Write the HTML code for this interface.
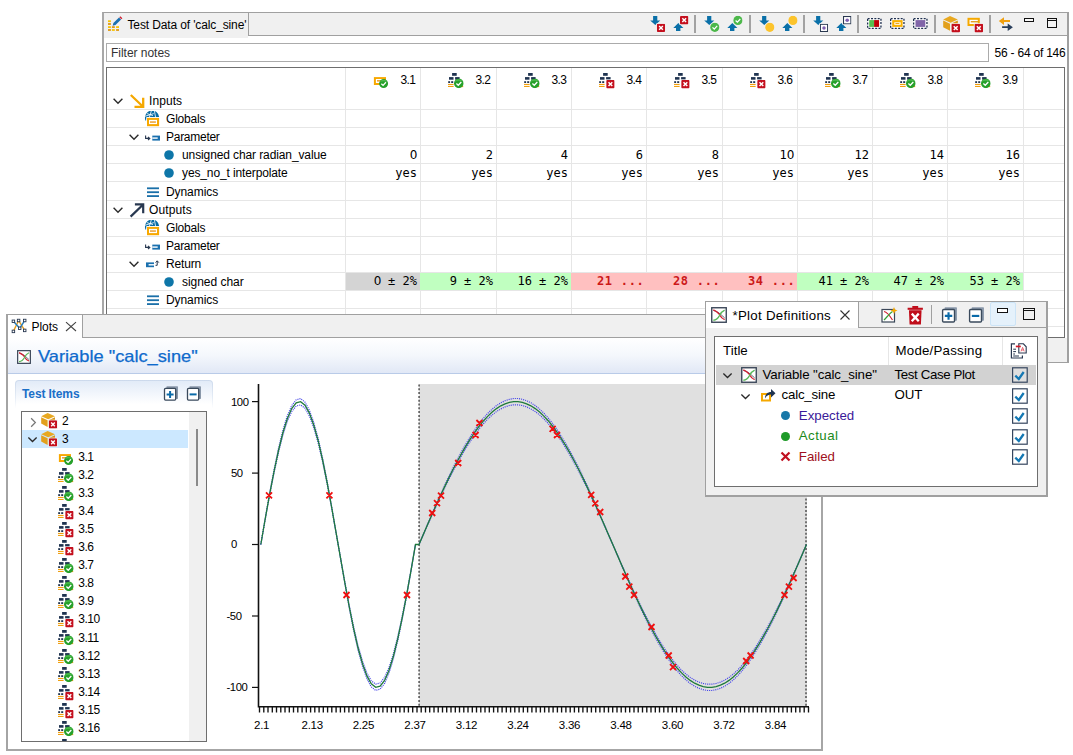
<!DOCTYPE html><html><head><meta charset="utf-8"><title>Test Data of calc_sine</title><style>
*{box-sizing:border-box}
html,body{margin:0;padding:0}
body{width:1073px;height:755px;overflow:hidden;background:#fff;position:relative;font-family:"Liberation Sans",sans-serif;font-size:12px;color:#000}
.a{position:absolute}
.t{position:absolute;white-space:nowrap;height:18px;line-height:18px;font-size:12px;letter-spacing:-0.25px}
.i{position:absolute;overflow:visible}
.m{font-family:"DejaVu Sans Mono","Liberation Mono",monospace;font-size:12px;letter-spacing:0;text-align:right}
.z{font-family:"DejaVu Sans",sans-serif;letter-spacing:-0.41px}
.hl{position:absolute;height:1px;background:#e6e6e6}
.vl{position:absolute;width:1px;background:#e6e6e6}
</style></head><body>
<svg width="0" height="0" style="position:absolute"><defs>
<symbol id="chev" viewBox="0 0 16 16"><path d="M3.6 5.8 L8 10.2 L12.4 5.8" fill="none" stroke="#2a2a2a" stroke-width="1.4"/></symbol>
<symbol id="chevr" viewBox="0 0 16 16"><path d="M5.5 3.5 L10 8 L5.5 12.5" fill="none" stroke="#777" stroke-width="1.3"/></symbol>
<symbol id="redx" viewBox="0 0 8 8"><rect x="0" y="0" width="8" height="8" rx="1" fill="#c4101e"/><path d="M2.2 2.2 L5.8 5.8 M5.8 2.2 L2.2 5.8" stroke="#fff" stroke-width="1.4"/></symbol>
<symbol id="grn" viewBox="0 0 9 9"><circle cx="4.5" cy="4.5" r="4.4" fill="#26a02a"/><path d="M0.9 3 A4 4 0 0 1 8.1 3 A8 8 0 0 0 0.9 3 Z" fill="#5cc45c" opacity="0.7"/><path d="M2.3 4.6 L4 6.2 L6.8 3.2" fill="none" stroke="#fff" stroke-width="1.2"/></symbol>
<symbol id="step" viewBox="0 0 16 16"><g fill="#1f3350"><rect x="4.1" y="0" width="4.6" height="2.8"/><rect x="1" y="4.1" width="4.5" height="2.6"/><rect x="7.1" y="4.1" width="4.5" height="2.6"/><rect x="0.2" y="8.2" width="1.9" height="1.8"/><rect x="3.2" y="8.2" width="2" height="1.8"/></g><rect x="0" y="10.9" width="5.6" height="1.1" fill="#f0a010"/><rect x="0" y="12.9" width="5.6" height="1.1" fill="#f0a010"/><rect x="12" y="13" width="3.2" height="1.1" fill="#f0a010"/></symbol>
<symbol id="stepok" viewBox="0 0 16 16"><use href="#step"/><use href="#grn" x="5.9" y="5.5" width="9.8" height="9.8"/></symbol>
<symbol id="stepbad" viewBox="0 0 16 16"><use href="#step"/><rect x="6.6" y="6.4" width="9.4" height="9.4" fill="#fff" opacity="0.8"/><use href="#redx" x="7.2" y="7" width="8.4" height="8.4"/></symbol>
<symbol id="winok" viewBox="0 0 16 16"><rect x="0.9" y="4.1" width="12.1" height="7.9" fill="#f8a800"/><rect x="2.9" y="6" width="8.1" height="4" fill="#fff"/><rect x="4" y="7.2" width="5" height="1.3" fill="#e89010"/><use href="#grn" x="6" y="6" width="9.2" height="9.2"/></symbol>
<symbol id="cube" viewBox="0 0 18 18"><path d="M7 1 L14.8 4.6 L7.6 7.7 L0.2 4.6 Z" fill="#e8a820"/><path d="M0.2 5.6 L7 8.7 L7 15.8 L0.2 12.2 Z" fill="#e2a01c"/><path d="M8.1 8.7 L14.8 5.6 L14.8 12.2 L8.1 15.8 Z" fill="#d89414"/><rect x="7.7" y="8.1" width="10" height="10" fill="#f0f0f0" opacity="0.85"/><use href="#redx" x="8.4" y="8.8" width="8.6" height="8.6"/></symbol>
<symbol id="arrin" viewBox="0 0 16 16"><path d="M1.8 2 L13.3 13 M5.5 13.8 L14.2 13.8 L14.2 4.8" fill="none" stroke="#f5a800" stroke-width="2.3"/></symbol>
<symbol id="arrout" viewBox="0 0 16 16"><path d="M1.6 14.6 L13.4 3.2 M5.9 2.4 L14.2 2.4 L14.2 11.2" fill="none" stroke="#283850" stroke-width="2.2"/></symbol>
<symbol id="glob" viewBox="0 0 16 16"><path d="M1 7.2 A7.1 7.1 0 0 1 15.2 6.1 L2.4 6.1 L2 10 Q0.9 9 1 7.2 Z" fill="#0a6ca4"/><path d="M7.4 -0.3 L5.4 6.2 M10.4 0 L11.6 6.2 M1.2 5.2 L9.8 2.6 M3 2.6 L9 4.6" stroke="#fff" stroke-width="0.8" fill="none"/><rect x="3" y="6.9" width="12.1" height="8.3" fill="#f8a800"/><rect x="5" y="8.9" width="8" height="4.2" fill="#fff"/><rect x="6" y="10.4" width="5.9" height="1.3" fill="#e89010"/></symbol>
<symbol id="param" viewBox="0 0 16 16"><path d="M1.6 6.6 L1.6 9.4 L5.6 9.4 M4 7.8 L5.8 9.4 L4 11" fill="none" stroke="#283850" stroke-width="1.1"/><rect x="8.3" y="6.6" width="8" height="5" fill="#1a70ae"/><rect x="8.3" y="8.4" width="5.4" height="1.4" fill="#fff"/></symbol>
<symbol id="ret" viewBox="0 0 16 16"><rect x="2" y="6.4" width="8" height="4.8" fill="#1a70ae"/><rect x="4.6" y="8.1" width="5.4" height="1.4" fill="#fff"/><path d="M11.5 9.3 L13.2 9.3 L13.2 5 M11.6 6.6 L13.2 4.8 L14.8 6.6" fill="none" stroke="#283850" stroke-width="1"/></symbol>
<symbol id="dyn" viewBox="0 0 16 16"><rect x="2" y="3.4" width="12" height="1.8" fill="#1a6fa8"/><rect x="2" y="7.3" width="12" height="1.8" fill="#1a6fa8"/><rect x="2" y="11.2" width="12" height="1.8" fill="#1a6fa8"/></symbol>
<symbol id="dot" viewBox="0 0 16 16"><circle cx="8" cy="8" r="4.8" fill="#0e76a8"/></symbol>
<symbol id="var" viewBox="0 0 15 15"><rect x="0.7" y="0.7" width="13.6" height="13.6" fill="#fff" stroke="#3a4658" stroke-width="1.3"/><path d="M2.2 3.2 C6.5 4.2 8 6 12.8 10.2" fill="none" stroke="#283850" stroke-width="0.7"/><path d="M2.2 2.8 C5 4.2 7.5 5.5 8.5 8 C9.5 10 11 11.2 12.8 11.8" fill="none" stroke="#d02030" stroke-width="1.3"/><path d="M2.2 12.4 C5.5 12.2 7 10 8 8 C9 5.8 10.5 4 12.8 3" fill="none" stroke="#58b858" stroke-width="1.3"/></symbol>
<symbol id="dn" viewBox="0 0 16 16"><path d="M3.1 1 L7.3 1 L7.3 5.4 L10.3 5.4 L5.25 9.9 L0.2 5.4 L3.1 5.4 Z" fill="#0a70a8"/></symbol>
<symbol id="up" viewBox="0 0 16 16"><path d="M3 17 L7.4 17 L7.4 12.9 L10.4 12.9 L5.3 8.1 L0.3 12.9 L3 12.9 Z" fill="#0a70a8"/></symbol>
<symbol id="ycirc" viewBox="0 0 9 9"><circle cx="4.5" cy="4.5" r="4.4" fill="#fcc42c"/></symbol><symbol id="grn2" viewBox="0 0 9 9"><circle cx="4.5" cy="4.5" r="4.4" fill="#4cb84a"/><path d="M2.3 4.6 L4 6.2 L6.8 3.2" fill="none" stroke="#fff" stroke-width="1.2"/></symbol>
<symbol id="psq" viewBox="0 0 8 8"><rect x="0.5" y="0.5" width="7" height="7" fill="#fff" stroke="#2a3850" stroke-width="1"/><circle cx="4" cy="4" r="1.7" fill="#8060b0"/></symbol>
<symbol id="plus" viewBox="0 0 16 16"><path d="M3.4 1.8 L3.4 0.9 Q3.4 0.2 4.1 0.2 L14.3 0.2 Q15 0.2 15 0.9 L15 12.3 Q15 13 14.3 13 L13.3 13 Z" fill="#8a98aa"/><rect x="1.5" y="2.4" width="11.2" height="11.7" rx="1" fill="#fff" stroke="#3a4a5c" stroke-width="1.3"/><path d="M3.6 8.4 L10.6 8.4 M7.1 4.9 L7.1 11.9" stroke="#0a6aa8" stroke-width="2"/></symbol>
<symbol id="minus" viewBox="0 0 16 16"><path d="M3.4 1.8 L3.4 0.9 Q3.4 0.2 4.1 0.2 L14.3 0.2 Q15 0.2 15 0.9 L15 12.3 Q15 13 14.3 13 L13.3 13 Z" fill="#8a98aa"/><rect x="1.5" y="2.4" width="11.2" height="11.7" rx="1" fill="#fff" stroke="#3a4a5c" stroke-width="1.3"/><path d="M3.6 8.4 L10.6 8.4" stroke="#0a6aa8" stroke-width="2"/></symbol>
<symbol id="chk" viewBox="0 0 16 16"><rect x="0.6" y="0.8" width="14.6" height="14.4" fill="#fff" fill-opacity="0.3" stroke="#35455e" stroke-width="1.2"/><path d="M3.3 8.7 L6.8 12 L11.7 5" fill="none" stroke="#1478b4" stroke-width="2.3"/></symbol>
</defs></svg>
<div class="a" style="left:102px;top:12px;width:967px;height:351px;background:#fff;border:1px solid #a0a0a0;border-left:2px solid #a8a8a8;border-right:2px solid #a0a0a0"></div>
<div class="a" style="left:104px;top:13px;width:963px;height:22px;background:#f0f0f0"></div>
<div class="a" style="left:104px;top:338px;width:963px;height:24px;background:#f0f0f0"></div>
<div class="a" style="left:248px;top:35px;width:819px;height:1px;background:#a0a0a0"></div>
<div class="a" style="left:104px;top:13px;width:145px;height:25px;background:#f0f0f0;border-right:1px solid #a0a0a0"></div>
<div class="a" style="left:248px;top:36px;width:1px;height:2px;background:#fff"></div>
<svg class="i" style="left:108px;top:16px" width="16" height="16" viewBox="0 0 16 16"><rect x="0" y="4.3" width="2.9" height="1.8" fill="#f8c400"/><rect x="0" y="7.1" width="2.9" height="1.8" fill="#e09810"/><rect x="0" y="10.2" width="2.9" height="1.8" fill="#f8c400"/><rect x="0" y="13.1" width="2.9" height="1.8" fill="#e09810"/><rect x="3.9" y="10.2" width="2.9" height="1.8" fill="#e09810"/><rect x="3.9" y="13.1" width="2.9" height="1.8" fill="#f8c400"/><rect x="8.1" y="10.2" width="2.9" height="1.8" fill="#f8c400"/><rect x="8.1" y="13.1" width="2.9" height="1.8" fill="#e09810"/><path d="M4.7 9.8 L5.4 7 L11 1.5 L13.1 3.6 L7.5 9.1 Z" fill="#1a70b0"/><path d="M11.3 1.2 L12.3 0.2 L14.4 2.3 L13.4 3.3 Z" fill="#d02030"/></svg>
<div class="t " style="left:127.5px;top:16px;letter-spacing:-0.13px">Test Data of 'calc_sine'</div>
<svg class="i" style="left:650px;top:15px" width="18" height="18" viewBox="0 0 18 18"><use href="#dn" width="16" height="16"/><rect x="6.3" y="8.2" width="9.4" height="9.4" fill="#f0f0f0" opacity="0.8"/><use href="#redx" x="6.9" y="8.8" width="8.2" height="8.2"/></svg>
<svg class="i" style="left:673px;top:15px" width="18" height="18" viewBox="0 0 18 18"><use href="#up" width="16" height="16"/><rect x="6.4" y="0.4" width="9.6" height="9.6" fill="#f0f0f0" opacity="0.8"/><use href="#redx" x="7" y="1" width="8.4" height="8.4"/></svg>
<div class="a" style="left:694px;top:15px;width:2px;height:18px;background:#a2a2a2"></div>
<svg class="i" style="left:704.3px;top:15px" width="18" height="18" viewBox="0 0 18 18"><use href="#dn" width="16" height="16"/><use href="#grn2" x="6.1" y="7.6" width="9.4" height="9.4"/></svg>
<svg class="i" style="left:727.3px;top:15px" width="18" height="18" viewBox="0 0 18 18"><use href="#up" width="16" height="16"/><use href="#grn2" x="6.2" y="0.7" width="9.4" height="9.4"/></svg>
<div class="a" style="left:748.5px;top:15px;width:2px;height:18px;background:#a2a2a2"></div>
<svg class="i" style="left:758.6px;top:15px" width="18" height="18" viewBox="0 0 18 18"><use href="#dn" width="16" height="16"/><use href="#ycirc" x="6.1" y="7.6" width="9.4" height="9.4"/></svg>
<svg class="i" style="left:781.6px;top:15px" width="18" height="18" viewBox="0 0 18 18"><use href="#up" width="16" height="16"/><use href="#ycirc" x="6.2" y="0.7" width="9.4" height="9.4"/></svg>
<div class="a" style="left:802.8px;top:15px;width:2px;height:18px;background:#a2a2a2"></div>
<svg class="i" style="left:812.9px;top:15px" width="18" height="18" viewBox="0 0 18 18"><use href="#dn" width="16" height="16"/><rect x="6.3" y="8.2" width="9.4" height="9.4" fill="#f0f0f0" opacity="0.8"/><use href="#psq" x="6.9" y="8.8" width="8.2" height="8.2"/></svg>
<svg class="i" style="left:835.9px;top:15px" width="18" height="18" viewBox="0 0 18 18"><use href="#up" width="16" height="16"/><rect x="6.4" y="0.4" width="9.6" height="9.6" fill="#f0f0f0" opacity="0.8"/><use href="#psq" x="7" y="1" width="8.4" height="8.4"/></svg>
<div class="a" style="left:857px;top:15px;width:2px;height:18px;background:#a2a2a2"></div>
<svg class="i" style="left:867px;top:18px" width="15" height="11" viewBox="0 0 15 11"><rect x="0.65" y="0.65" width="13.3" height="9.7" fill="#fff" stroke="#1f3050" stroke-width="1.3" stroke-dasharray="2 1.35"/><rect x="2.2" y="2.1" width="5" height="6.8" fill="#58c050"/><rect x="7.1" y="2.1" width="5" height="6.8" fill="#c00008"/></svg>
<svg class="i" style="left:890px;top:18px" width="15" height="11" viewBox="0 0 15 11"><rect x="0.65" y="0.65" width="13.3" height="9.7" fill="#fff" stroke="#1f3050" stroke-width="1.3" stroke-dasharray="2 1.35"/><rect x="2.2" y="2.1" width="10.4" height="6.8" fill="#f8b000"/><rect x="4.3" y="4.3" width="6.4" height="2.5" fill="#fff"/><rect x="5.4" y="5.1" width="4" height="0.9" fill="#f0a000"/></svg>
<svg class="i" style="left:913px;top:18px" width="15" height="11" viewBox="0 0 15 11"><rect x="0.65" y="0.65" width="13.3" height="9.7" fill="#fff" stroke="#1f3050" stroke-width="1.3" stroke-dasharray="2 1.35"/><rect x="2.5" y="2.1" width="9.8" height="6.8" fill="#8064a8"/></svg>
<div class="a" style="left:934px;top:15px;width:2px;height:18px;background:#a2a2a2"></div>
<svg class="i" style="left:943px;top:15px" width="18" height="18" viewBox="0 0 18 18"><use href="#cube"/></svg>
<svg class="i" style="left:967px;top:16px" width="17" height="17" viewBox="0 0 17 17"><rect x="0.5" y="1.8" width="12.3" height="8.2" fill="#f5a800"/><rect x="2.5" y="3.8" width="8.3" height="4.2" fill="#fff"/><rect x="3.8" y="5.1" width="7.4" height="1.3" fill="#e09810"/><rect x="6.8" y="7.1" width="10" height="10" fill="#f0f0f0" opacity="0.85"/><use href="#redx" x="7.5" y="7.8" width="8.6" height="8.6"/></svg>
<div class="a" style="left:988.5px;top:15px;width:2px;height:18px;background:#a2a2a2"></div>
<svg class="i" style="left:998px;top:16px" width="16" height="16" viewBox="0 0 16 16"><path d="M0.8 5.1 L6 1.3 L6 4.1 L12 4.1 L12 6 L6 6 L6 8.9 Z" fill="#f0a010"/><path d="M14.9 11.2 L9.7 7.4 L9.7 10.3 L4.1 10.3 L4.1 12.1 L9.7 12.1 L9.7 14.9 Z" fill="#2a3f5c"/></svg>
<div class="a" style="left:1024px;top:18px;width:10px;height:4px;border:1px solid #111;background:#f8f8f8"></div>
<div class="a" style="left:1047px;top:18px;width:10px;height:10px;border:1px solid #111;background:linear-gradient(#f0f0f0 1px,#111 1px,#111 2px,#f4f4f4 2px)"></div>
<div class="a" style="left:106px;top:43px;width:883px;height:19px;background:#fff;border:1px solid #ababab"></div>
<div class="t " style="left:111px;top:43.5px;letter-spacing:-0.03px;color:#333">Filter notes</div>
<div class="t " style="left:994.5px;top:43.5px;letter-spacing:-0.218px;">56 - 64 of 146</div>
<div class="a" style="left:106px;top:67px;width:959px;height:271px;background:#fff;border:1px solid #6e6e6e"></div>
<div class="hl" style="left:107px;top:109px;width:957px"></div>
<div class="hl" style="left:107px;top:127px;width:957px"></div>
<div class="hl" style="left:107px;top:145px;width:957px"></div>
<div class="hl" style="left:107px;top:163px;width:957px"></div>
<div class="hl" style="left:107px;top:181px;width:957px"></div>
<div class="hl" style="left:107px;top:200px;width:957px"></div>
<div class="hl" style="left:107px;top:218px;width:957px"></div>
<div class="hl" style="left:107px;top:236px;width:957px"></div>
<div class="hl" style="left:107px;top:254px;width:957px"></div>
<div class="hl" style="left:107px;top:272px;width:957px"></div>
<div class="hl" style="left:107px;top:290px;width:957px"></div>
<div class="hl" style="left:107px;top:308px;width:957px"></div>
<div class="hl" style="left:107px;top:326px;width:957px"></div>
<div class="vl" style="left:345px;top:68px;height:269px"></div>
<div class="vl" style="left:420px;top:68px;height:269px"></div>
<div class="vl" style="left:496px;top:68px;height:269px"></div>
<div class="vl" style="left:571px;top:68px;height:269px"></div>
<div class="vl" style="left:646px;top:68px;height:269px"></div>
<div class="vl" style="left:722px;top:68px;height:269px"></div>
<div class="vl" style="left:797px;top:68px;height:269px"></div>
<div class="vl" style="left:872px;top:68px;height:269px"></div>
<div class="vl" style="left:947px;top:68px;height:269px"></div>
<div class="vl" style="left:1023px;top:68px;height:269px"></div>
<svg class="i" style="left:373px;top:73px" width="16" height="16" viewBox="0 0 16 16"><use href="#winok"/></svg>
<div class="t " style="left:400.5px;top:71px;letter-spacing:-0.6px">3.1</div>
<svg class="i" style="left:448px;top:73px" width="16" height="16" viewBox="0 0 16 16"><use href="#stepok"/></svg>
<div class="t " style="left:475.5px;top:71px;letter-spacing:-0.6px">3.2</div>
<svg class="i" style="left:524px;top:73px" width="16" height="16" viewBox="0 0 16 16"><use href="#stepok"/></svg>
<div class="t " style="left:551.5px;top:71px;letter-spacing:-0.6px">3.3</div>
<svg class="i" style="left:599px;top:73px" width="16" height="16" viewBox="0 0 16 16"><use href="#stepbad"/></svg>
<div class="t " style="left:626.5px;top:71px;letter-spacing:-0.6px">3.4</div>
<svg class="i" style="left:674px;top:73px" width="16" height="16" viewBox="0 0 16 16"><use href="#stepbad"/></svg>
<div class="t " style="left:701.5px;top:71px;letter-spacing:-0.6px">3.5</div>
<svg class="i" style="left:750px;top:73px" width="16" height="16" viewBox="0 0 16 16"><use href="#stepbad"/></svg>
<div class="t " style="left:777.5px;top:71px;letter-spacing:-0.6px">3.6</div>
<svg class="i" style="left:825px;top:73px" width="16" height="16" viewBox="0 0 16 16"><use href="#stepok"/></svg>
<div class="t " style="left:852.5px;top:71px;letter-spacing:-0.6px">3.7</div>
<svg class="i" style="left:900px;top:73px" width="16" height="16" viewBox="0 0 16 16"><use href="#stepok"/></svg>
<div class="t " style="left:927.5px;top:71px;letter-spacing:-0.6px">3.8</div>
<svg class="i" style="left:975px;top:73px" width="16" height="16" viewBox="0 0 16 16"><use href="#stepok"/></svg>
<div class="t " style="left:1002.5px;top:71px;letter-spacing:-0.6px">3.9</div>
<svg class="i" style="left:110px;top:93px" width="16" height="16" viewBox="0 0 16 16"><use href="#chev"/></svg>
<svg class="i" style="left:129px;top:93px" width="16" height="16" viewBox="0 0 16 16"><use href="#arrin"/></svg>
<div class="t " style="left:149px;top:92px;letter-spacing:0.085px;">Inputs</div>
<svg class="i" style="left:144px;top:111px" width="16" height="16" viewBox="0 0 16 16"><use href="#glob"/></svg>
<div class="t " style="left:166px;top:110px;letter-spacing:-0.198px;">Globals</div>
<svg class="i" style="left:126px;top:129px" width="16" height="16" viewBox="0 0 16 16"><use href="#chev"/></svg>
<svg class="i" style="left:144px;top:129px" width="16" height="16" viewBox="0 0 16 16"><use href="#param"/></svg>
<div class="t " style="left:166px;top:128px;letter-spacing:-0.269px;">Parameter</div>
<svg class="i" style="left:161px;top:147px" width="16" height="16" viewBox="0 0 16 16"><use href="#dot"/></svg>
<div class="t " style="left:182px;top:146px;letter-spacing:-0.109px;">unsigned char radian_value</div>
<svg class="i" style="left:161px;top:165px" width="16" height="16" viewBox="0 0 16 16"><use href="#dot"/></svg>
<div class="t " style="left:182px;top:164px;letter-spacing:-0.124px;">yes_no_t interpolate</div>
<svg class="i" style="left:145px;top:184px" width="16" height="16" viewBox="0 0 16 16"><use href="#dyn"/></svg>
<div class="t " style="left:166px;top:183px;letter-spacing:-0.072px;">Dynamics</div>
<svg class="i" style="left:110px;top:202px" width="16" height="16" viewBox="0 0 16 16"><use href="#chev"/></svg>
<svg class="i" style="left:129px;top:202px" width="16" height="16" viewBox="0 0 16 16"><use href="#arrout"/></svg>
<div class="t " style="left:149px;top:201px;letter-spacing:0.125px;">Outputs</div>
<svg class="i" style="left:144px;top:220px" width="16" height="16" viewBox="0 0 16 16"><use href="#glob"/></svg>
<div class="t " style="left:166px;top:219px;letter-spacing:-0.198px;">Globals</div>
<svg class="i" style="left:144px;top:238px" width="16" height="16" viewBox="0 0 16 16"><use href="#param"/></svg>
<div class="t " style="left:166px;top:237px;letter-spacing:-0.269px;">Parameter</div>
<svg class="i" style="left:126px;top:256px" width="16" height="16" viewBox="0 0 16 16"><use href="#chev"/></svg>
<svg class="i" style="left:144px;top:256px" width="16" height="16" viewBox="0 0 16 16"><use href="#ret"/></svg>
<div class="t " style="left:166px;top:255px;letter-spacing:-0.17px;">Return</div>
<svg class="i" style="left:161px;top:274px" width="16" height="16" viewBox="0 0 16 16"><use href="#dot"/></svg>
<div class="t " style="left:182px;top:273px;letter-spacing:-0.04px;">signed char</div>
<svg class="i" style="left:145px;top:292px" width="16" height="16" viewBox="0 0 16 16"><use href="#dyn"/></svg>
<div class="t " style="left:166px;top:291px;letter-spacing:-0.072px;">Dynamics</div>
<div class="t m" style="left:345px;top:146px;width:72px;"><span class="z">0</span></div>
<div class="t m" style="left:345px;top:164px;width:72px;">yes</div>
<div class="a" style="left:346px;top:273px;width:74px;height:17px;background:#d4d4d4"></div>
<div class="t m" style="left:345px;top:272px;width:72px;"><span class="z">0</span>&nbsp;±&nbsp;2%</div>
<div class="t m" style="left:420px;top:146px;width:73px;">2</div>
<div class="t m" style="left:420px;top:164px;width:73px;">yes</div>
<div class="a" style="left:420px;top:273px;width:76px;height:17px;background:#c0ffc0"></div>
<div class="t m" style="left:420px;top:272px;width:73px;">9&nbsp;±&nbsp;2%</div>
<div class="t m" style="left:496px;top:146px;width:72px;">4</div>
<div class="t m" style="left:496px;top:164px;width:72px;">yes</div>
<div class="a" style="left:496px;top:273px;width:75px;height:17px;background:#c0ffc0"></div>
<div class="t m" style="left:496px;top:272px;width:72px;">16&nbsp;±&nbsp;2%</div>
<div class="t m" style="left:571px;top:146px;width:72px;">6</div>
<div class="t m" style="left:571px;top:164px;width:72px;">yes</div>
<div class="a" style="left:571px;top:273px;width:75px;height:17px;background:#ffc0c0"></div>
<div class="t m" style="left:571px;top:272px;width:73.5px;color:#cc1818;font-weight:bold;letter-spacing:0.7px">21&nbsp;...</div>
<div class="t m" style="left:646px;top:146px;width:73px;">8</div>
<div class="t m" style="left:646px;top:164px;width:73px;">yes</div>
<div class="a" style="left:646px;top:273px;width:76px;height:17px;background:#ffc0c0"></div>
<div class="t m" style="left:646px;top:272px;width:74.5px;color:#cc1818;font-weight:bold;letter-spacing:0.7px">28&nbsp;...</div>
<div class="t m" style="left:722px;top:146px;width:72px;">1<span class="z">0</span></div>
<div class="t m" style="left:722px;top:164px;width:72px;">yes</div>
<div class="a" style="left:722px;top:273px;width:75px;height:17px;background:#ffc0c0"></div>
<div class="t m" style="left:722px;top:272px;width:73.5px;color:#cc1818;font-weight:bold;letter-spacing:0.7px">34&nbsp;...</div>
<div class="t m" style="left:797px;top:146px;width:72px;">12</div>
<div class="t m" style="left:797px;top:164px;width:72px;">yes</div>
<div class="a" style="left:797px;top:273px;width:75px;height:17px;background:#c0ffc0"></div>
<div class="t m" style="left:797px;top:272px;width:72px;">41&nbsp;±&nbsp;2%</div>
<div class="t m" style="left:872px;top:146px;width:72px;">14</div>
<div class="t m" style="left:872px;top:164px;width:72px;">yes</div>
<div class="a" style="left:872px;top:273px;width:75px;height:17px;background:#c0ffc0"></div>
<div class="t m" style="left:872px;top:272px;width:72px;">47&nbsp;±&nbsp;2%</div>
<div class="t m" style="left:947px;top:146px;width:73px;">16</div>
<div class="t m" style="left:947px;top:164px;width:73px;">yes</div>
<div class="a" style="left:947px;top:273px;width:76px;height:17px;background:#c0ffc0"></div>
<div class="t m" style="left:947px;top:272px;width:73px;">53&nbsp;±&nbsp;2%</div>
<div class="a" style="left:6px;top:314px;width:817px;height:437px;background:#fff;border:1px solid #a0a0a0;border-left:2px solid #a4a4a4;border-right:2px solid #a6a6a6;border-bottom:2px solid #a6a6a6"></div>
<div class="a" style="left:8px;top:315px;width:813px;height:23px;background:#f0f0f0;border-bottom:1px solid #a0a0a0"></div>
<div class="a" style="left:8px;top:315px;width:75px;height:23px;background:#fff;border-right:1px solid #a0a0a0"></div>
<svg class="i" style="left:0;top:0" width="40" height="340" viewBox="0 0 40 340"><path d="M13.4 331.4 L18.6 320.5 L24.7 330.4" fill="none" stroke="#eaa020" stroke-width="1.4"/><path d="M13.4 321.3 L19.7 328.3 L24.7 320.5" fill="none" stroke="#2a80c0" stroke-width="1.4"/><rect x="12.15" y="320.05" width="2.5" height="2.5" fill="#fff" stroke="#283850" stroke-width="0.9"/><rect x="17.35" y="319.25" width="2.5" height="2.5" fill="#fff" stroke="#283850" stroke-width="0.9"/><rect x="23.45" y="319.25" width="2.5" height="2.5" fill="#fff" stroke="#283850" stroke-width="0.9"/><rect x="12.15" y="330.15" width="2.5" height="2.5" fill="#fff" stroke="#283850" stroke-width="0.9"/><rect x="18.45" y="327.05" width="2.5" height="2.5" fill="#fff" stroke="#283850" stroke-width="0.9"/><rect x="23.45" y="329.15" width="2.5" height="2.5" fill="#fff" stroke="#283850" stroke-width="0.9"/></svg>
<div class="t " style="left:31.5px;top:318px;letter-spacing:-0.036px;">Plots</div>
<svg class="i" style="left:65px;top:321px" width="12" height="12" viewBox="0 0 12 12"><path d="M1 1.2 L11 10 M11 1.2 L1 10" stroke="#444" stroke-width="1.1"/></svg>
<div class="a" style="left:8px;top:338px;width:813px;height:36px;background:linear-gradient(#ffffff 0%,#f4f7fc 50%,#e1e8f6 100%);border-bottom:1px solid #b9cbe8"></div>
<svg class="i" style="left:17px;top:350px" width="14" height="14" viewBox="0 0 14 14"><use href="#var"/></svg>
<div class="a" style="left:37.5px;top:345px;height:22px;line-height:22px;font-size:16.5px;color:#0e6acc;-webkit-text-stroke:0.25px #0e6acc;white-space:nowrap;transform-origin:0 50%;transform:scaleX(1.106)" id="vtitle">Variable "calc_sine"</div>
<div class="a" style="left:15px;top:380px;width:198px;height:30px;padding:1px 1px 0 1px;border-radius:4px 4px 0 0;background:linear-gradient(#ccd9ec,#e6edf6 60%,#ffffff 95%)"><div style="width:100%;height:100%;border-radius:3px 3px 0 0;background:linear-gradient(#e2ebf8,#ffffff 80%)"></div></div>
<div class="a" style="left:22px;top:384.5px;height:18px;line-height:18px;font-size:12px;font-weight:bold;color:#1a6fc8;white-space:nowrap;letter-spacing:-0.1px" id="titems">Test Items</div>
<svg class="i" style="left:163px;top:386px" width="16" height="16" viewBox="0 0 16 16"><use href="#plus"/></svg>
<svg class="i" style="left:186.3px;top:386px" width="16" height="16" viewBox="0 0 16 16"><use href="#minus"/></svg>
<div class="a" style="left:21px;top:411px;width:186px;height:331px;background:#fff;border:1px solid #6e6e6e"></div>
<div class="a" style="left:189px;top:412px;width:17px;height:329px;background:#f0f0f0"></div>
<div class="a" style="left:196px;top:429px;width:2px;height:57px;background:#8a8a8a"></div>
<div class="a" style="left:22px;top:430px;width:166px;height:18px;background:#cce8ff"></div>
<svg class="i" style="left:25.5px;top:414.8px" width="15" height="15" viewBox="0 0 15 15"><use href="#chevr"/></svg>
<svg class="i" style="left:41px;top:412px" width="17" height="17" viewBox="0 0 17 17"><use href="#cube"/></svg>
<div class="t " style="left:62px;top:411.5px;">2</div>
<svg class="i" style="left:25px;top:432px" width="15" height="15" viewBox="0 0 15 15"><use href="#chev"/></svg>
<svg class="i" style="left:41px;top:430px" width="17" height="17" viewBox="0 0 17 17"><use href="#cube"/></svg>
<div class="t " style="left:62px;top:429.5px;">3</div>
<svg class="i" style="left:58px;top:450px" width="16" height="16" viewBox="0 0 16 16"><use href="#winok"/></svg>
<div class="t " style="left:78.3px;top:448px;letter-spacing:-0.5px">3.1</div>
<svg class="i" style="left:58px;top:468px" width="16" height="16" viewBox="0 0 16 16"><use href="#stepok"/></svg>
<div class="t " style="left:78.3px;top:466px;letter-spacing:-0.5px">3.2</div>
<svg class="i" style="left:58px;top:486px" width="16" height="16" viewBox="0 0 16 16"><use href="#stepok"/></svg>
<div class="t " style="left:78.3px;top:484px;letter-spacing:-0.5px">3.3</div>
<svg class="i" style="left:58px;top:504px" width="16" height="16" viewBox="0 0 16 16"><use href="#stepbad"/></svg>
<div class="t " style="left:78.3px;top:502px;letter-spacing:-0.5px">3.4</div>
<svg class="i" style="left:58px;top:522px" width="16" height="16" viewBox="0 0 16 16"><use href="#stepbad"/></svg>
<div class="t " style="left:78.3px;top:520px;letter-spacing:-0.5px">3.5</div>
<svg class="i" style="left:58px;top:540px" width="16" height="16" viewBox="0 0 16 16"><use href="#stepbad"/></svg>
<div class="t " style="left:78.3px;top:538px;letter-spacing:-0.5px">3.6</div>
<svg class="i" style="left:58px;top:558px" width="16" height="16" viewBox="0 0 16 16"><use href="#stepok"/></svg>
<div class="t " style="left:78.3px;top:556px;letter-spacing:-0.5px">3.7</div>
<svg class="i" style="left:58px;top:576px" width="16" height="16" viewBox="0 0 16 16"><use href="#stepok"/></svg>
<div class="t " style="left:78.3px;top:574px;letter-spacing:-0.5px">3.8</div>
<svg class="i" style="left:58px;top:594px" width="16" height="16" viewBox="0 0 16 16"><use href="#stepok"/></svg>
<div class="t " style="left:78.3px;top:592px;letter-spacing:-0.5px">3.9</div>
<svg class="i" style="left:58px;top:612px" width="16" height="16" viewBox="0 0 16 16"><use href="#stepbad"/></svg>
<div class="t " style="left:78.3px;top:610px;letter-spacing:-0.5px">3.10</div>
<svg class="i" style="left:58px;top:630px" width="16" height="16" viewBox="0 0 16 16"><use href="#stepok"/></svg>
<div class="t " style="left:78.3px;top:629px;letter-spacing:-0.5px">3.11</div>
<svg class="i" style="left:58px;top:649px" width="16" height="16" viewBox="0 0 16 16"><use href="#stepok"/></svg>
<div class="t " style="left:78.3px;top:647px;letter-spacing:-0.5px">3.12</div>
<svg class="i" style="left:58px;top:667px" width="16" height="16" viewBox="0 0 16 16"><use href="#stepok"/></svg>
<div class="t " style="left:78.3px;top:665px;letter-spacing:-0.5px">3.13</div>
<svg class="i" style="left:58px;top:685px" width="16" height="16" viewBox="0 0 16 16"><use href="#stepbad"/></svg>
<div class="t " style="left:78.3px;top:683px;letter-spacing:-0.5px">3.14</div>
<svg class="i" style="left:58px;top:703px" width="16" height="16" viewBox="0 0 16 16"><use href="#stepbad"/></svg>
<div class="t " style="left:78.3px;top:701px;letter-spacing:-0.5px">3.15</div>
<svg class="i" style="left:58px;top:721px" width="16" height="16" viewBox="0 0 16 16"><use href="#stepok"/></svg>
<div class="t " style="left:78.3px;top:719px;letter-spacing:-0.5px">3.16</div>
<svg class="i" style="left:58px;top:739px;clip-path:inset(0 0 14px 0)" width="16" height="16" viewBox="0 0 16 16"><use href="#stepok"/></svg>
<div class="a" style="left:21px;top:741px;width:186px;height:1px;background:#6e6e6e"></div>
<div class="a" style="left:9px;top:742px;width:240px;height:7px;background:#fff"></div>
<svg class="i" style="left:0;top:0" width="1073" height="755" viewBox="0 0 1073 755"><rect x="419" y="384" width="388" height="322" fill="#e0e0e0"/><path d="M419.1 384.5 L419.1 706 M806 384.5 L806 706" stroke="#505050" stroke-width="1.5" stroke-dasharray="2 1.8" fill="none"/><path d="M258.5 384 L258.5 706.7 L809 706.7" fill="none" stroke="#111" stroke-width="1.6"/><path d="M252 401.6 L258 401.6" stroke="#111" stroke-width="1.2"/><path d="M252 473.1 L258 473.1" stroke="#111" stroke-width="1.2"/><path d="M252 544.5 L258 544.5" stroke="#111" stroke-width="1.2"/><path d="M252 616.0 L258 616.0" stroke="#111" stroke-width="1.2"/><path d="M252 687.4 L258 687.4" stroke="#111" stroke-width="1.2"/><path d="M259.5 707 L259.5 712.4 M263.8 707 L263.8 712.4 M268.0 707 L268.0 712.4 M272.3 707 L272.3 712.4 M276.5 707 L276.5 712.4 M280.8 707 L280.8 712.4 M285.0 707 L285.0 712.4 M289.3 707 L289.3 712.4 M293.5 707 L293.5 712.4 M297.8 707 L297.8 712.4 M302.1 707 L302.1 712.4 M306.3 707 L306.3 712.4 M310.6 707 L310.6 712.4 M314.8 707 L314.8 712.4 M319.1 707 L319.1 712.4 M323.3 707 L323.3 712.4 M327.6 707 L327.6 712.4 M331.8 707 L331.8 712.4 M336.1 707 L336.1 712.4 M340.4 707 L340.4 712.4 M344.6 707 L344.6 712.4 M348.9 707 L348.9 712.4 M353.1 707 L353.1 712.4 M357.4 707 L357.4 712.4 M361.6 707 L361.6 712.4 M365.9 707 L365.9 712.4 M370.1 707 L370.1 712.4 M374.4 707 L374.4 712.4 M378.7 707 L378.7 712.4 M382.9 707 L382.9 712.4 M387.2 707 L387.2 712.4 M391.4 707 L391.4 712.4 M395.7 707 L395.7 712.4 M399.9 707 L399.9 712.4 M404.2 707 L404.2 712.4 M408.4 707 L408.4 712.4 M412.7 707 L412.7 712.4 M417.0 707 L417.0 712.4 M421.2 707 L421.2 712.4 M425.5 707 L425.5 712.4 M429.7 707 L429.7 712.4 M434.0 707 L434.0 712.4 M438.2 707 L438.2 712.4 M442.5 707 L442.5 712.4 M446.7 707 L446.7 712.4 M451.0 707 L451.0 712.4 M455.3 707 L455.3 712.4 M459.5 707 L459.5 712.4 M463.8 707 L463.8 712.4 M468.0 707 L468.0 712.4 M472.3 707 L472.3 712.4 M476.5 707 L476.5 712.4 M480.8 707 L480.8 712.4 M485.0 707 L485.0 712.4 M489.3 707 L489.3 712.4 M493.6 707 L493.6 712.4 M497.8 707 L497.8 712.4 M502.1 707 L502.1 712.4 M506.3 707 L506.3 712.4 M510.6 707 L510.6 712.4 M514.8 707 L514.8 712.4 M519.1 707 L519.1 712.4 M523.3 707 L523.3 712.4 M527.6 707 L527.6 712.4 M531.9 707 L531.9 712.4 M536.1 707 L536.1 712.4 M540.4 707 L540.4 712.4 M544.6 707 L544.6 712.4 M548.9 707 L548.9 712.4 M553.1 707 L553.1 712.4 M557.4 707 L557.4 712.4 M561.6 707 L561.6 712.4 M565.9 707 L565.9 712.4 M570.2 707 L570.2 712.4 M574.4 707 L574.4 712.4 M578.7 707 L578.7 712.4 M582.9 707 L582.9 712.4 M587.2 707 L587.2 712.4 M591.4 707 L591.4 712.4 M595.7 707 L595.7 712.4 M599.9 707 L599.9 712.4 M604.2 707 L604.2 712.4 M608.5 707 L608.5 712.4 M612.7 707 L612.7 712.4 M617.0 707 L617.0 712.4 M621.2 707 L621.2 712.4 M625.5 707 L625.5 712.4 M629.7 707 L629.7 712.4 M634.0 707 L634.0 712.4 M638.2 707 L638.2 712.4 M642.5 707 L642.5 712.4 M646.8 707 L646.8 712.4 M651.0 707 L651.0 712.4 M655.3 707 L655.3 712.4 M659.5 707 L659.5 712.4 M663.8 707 L663.8 712.4 M668.0 707 L668.0 712.4 M672.3 707 L672.3 712.4 M676.5 707 L676.5 712.4 M680.8 707 L680.8 712.4 M685.0 707 L685.0 712.4 M689.3 707 L689.3 712.4 M693.6 707 L693.6 712.4 M697.8 707 L697.8 712.4 M702.1 707 L702.1 712.4 M706.3 707 L706.3 712.4 M710.6 707 L710.6 712.4 M714.8 707 L714.8 712.4 M719.1 707 L719.1 712.4 M723.3 707 L723.3 712.4 M727.6 707 L727.6 712.4 M731.9 707 L731.9 712.4 M736.1 707 L736.1 712.4 M740.4 707 L740.4 712.4 M744.6 707 L744.6 712.4 M748.9 707 L748.9 712.4 M753.1 707 L753.1 712.4 M757.4 707 L757.4 712.4 M761.6 707 L761.6 712.4 M765.9 707 L765.9 712.4 M770.2 707 L770.2 712.4 M774.4 707 L774.4 712.4 M778.7 707 L778.7 712.4 M782.9 707 L782.9 712.4 M787.2 707 L787.2 712.4 M791.4 707 L791.4 712.4 M795.7 707 L795.7 712.4 M799.9 707 L799.9 712.4 M804.2 707 L804.2 712.4 M808.5 707 L808.5 712.4" stroke="#111" stroke-width="1.35" fill="none"/><path d="M260.8 544.5 L265.2 518.4 L269.6 493.2 L274.1 469.6 L278.5 448.4 L282.9 430.3 L287.3 415.9 L291.7 405.6 L296.2 399.8 L300.6 398.6 L305.0 402.1 L309.4 410.2 L313.8 422.6 L318.3 438.9 L322.7 458.7 L327.1 481.1 L331.5 505.6 L335.9 531.4 L340.4 557.6 L344.8 583.4 L349.2 607.9 L353.6 630.3 L358.0 650.1 L362.5 666.4 L366.9 678.8 L371.3 686.9 L375.7 690.4 L380.1 689.2 L384.6 683.4 L389.0 673.1 L393.4 658.7 L397.8 640.6 L402.2 619.4 L406.7 595.8 L411.1 570.6 L415.5 544.5 L419.2 544.5 L419.0 544.5 L423.3 534.3 L427.6 524.2 L431.9 514.1 L436.2 504.2 L440.5 494.6 L444.8 485.1 L449.1 475.9 L453.4 467.1 L457.8 458.7 L462.1 450.6 L466.4 443.0 L470.7 436.0 L475.0 429.4 L479.3 423.4 L483.6 418.0 L487.9 413.2 L492.2 409.1 L496.5 405.6 L500.8 402.8 L505.1 400.7 L509.4 399.3 L513.7 398.5 L518.0 398.5 L522.3 399.3 L526.6 400.7 L530.9 402.8 L535.2 405.6 L539.6 409.1 L543.9 413.2 L548.2 418.0 L552.5 423.4 L556.8 429.4 L561.1 436.0 L565.4 443.0 L569.7 450.6 L574.0 458.7 L578.3 467.1 L582.6 475.9 L586.9 485.1 L591.2 494.6 L595.5 504.2 L599.8 514.1 L604.1 524.2 L608.4 534.3 L612.8 544.5 L617.1 554.7 L621.4 564.8 L625.7 574.9 L630.0 584.8 L634.3 594.4 L638.6 603.9 L642.9 613.1 L647.2 621.9 L651.5 630.3 L655.8 638.4 L660.1 646.0 L664.4 653.0 L668.7 659.6 L673.0 665.6 L677.3 671.0 L681.6 675.8 L685.9 679.9 L690.2 683.4 L694.6 686.2 L698.9 688.3 L703.2 689.7 L707.5 690.5 L711.8 690.5 L716.1 689.7 L720.4 688.3 L724.7 686.2 L729.0 683.4 L733.3 679.9 L737.6 675.8 L741.9 671.0 L746.2 665.6 L750.5 659.6 L754.8 653.0 L759.1 646.0 L763.4 638.4 L767.8 630.3 L772.1 621.9 L776.4 613.1 L780.7 603.9 L785.0 594.4 L789.3 584.8 L793.6 574.9 L797.9 564.8 L802.2 554.7 L806.5 544.5" fill="none" stroke="#4848e8" stroke-width="1.2" stroke-dasharray="1.1 1"/><path d="M260.8 544.5 L265.2 519.5 L269.6 495.4 L274.1 472.8 L278.5 452.5 L282.9 435.2 L287.3 421.4 L291.7 411.6 L296.2 406.0 L300.6 404.9 L305.0 408.2 L309.4 416.0 L313.8 427.9 L318.3 443.5 L322.7 462.4 L327.1 483.9 L331.5 507.3 L335.9 532.0 L340.4 557.0 L344.8 581.7 L349.2 605.1 L353.6 626.6 L358.0 645.5 L362.5 661.1 L366.9 673.0 L371.3 680.8 L375.7 684.1 L380.1 683.0 L384.6 677.4 L389.0 667.6 L393.4 653.8 L397.8 636.5 L402.2 616.2 L406.7 593.6 L411.1 569.5 L415.5 544.5 L419.2 544.5 L419.0 544.5 L423.3 534.8 L427.6 525.0 L431.9 515.4 L436.2 506.0 L440.5 496.7 L444.8 487.7 L449.1 478.9 L453.4 470.4 L457.8 462.4 L462.1 454.7 L466.4 447.4 L470.7 440.6 L475.0 434.4 L479.3 428.6 L483.6 423.5 L487.9 418.9 L492.2 414.9 L496.5 411.6 L500.8 408.9 L505.1 406.9 L509.4 405.5 L513.7 404.8 L518.0 404.8 L522.3 405.5 L526.6 406.9 L530.9 408.9 L535.2 411.6 L539.6 414.9 L543.9 418.9 L548.2 423.5 L552.5 428.6 L556.8 434.4 L561.1 440.6 L565.4 447.4 L569.7 454.7 L574.0 462.4 L578.3 470.4 L582.6 478.9 L586.9 487.7 L591.2 496.7 L595.5 506.0 L599.8 515.4 L604.1 525.0 L608.4 534.8 L612.8 544.5 L617.1 554.2 L621.4 564.0 L625.7 573.6 L630.0 583.0 L634.3 592.3 L638.6 601.3 L642.9 610.1 L647.2 618.6 L651.5 626.6 L655.8 634.3 L660.1 641.6 L664.4 648.4 L668.7 654.6 L673.0 660.4 L677.3 665.5 L681.6 670.1 L685.9 674.1 L690.2 677.4 L694.6 680.1 L698.9 682.1 L703.2 683.5 L707.5 684.2 L711.8 684.2 L716.1 683.5 L720.4 682.1 L724.7 680.1 L729.0 677.4 L733.3 674.1 L737.6 670.1 L741.9 665.5 L746.2 660.4 L750.5 654.6 L754.8 648.4 L759.1 641.6 L763.4 634.3 L767.8 626.6 L772.1 618.6 L776.4 610.1 L780.7 601.3 L785.0 592.3 L789.3 583.0 L793.6 573.6 L797.9 564.0 L802.2 554.2 L806.5 544.5" fill="none" stroke="#4848e8" stroke-width="1.2" stroke-dasharray="1.1 1"/><path d="M260.8 544.5 L265.2 519.0 L269.6 494.3 L274.1 471.2 L278.5 450.5 L282.9 432.8 L287.3 418.7 L291.7 408.6 L296.2 402.9 L300.6 401.7 L305.0 405.2 L309.4 413.1 L313.8 425.2 L318.3 441.2 L322.7 460.5 L327.1 482.5 L331.5 506.5 L335.9 531.7 L340.4 557.3 L344.8 582.5 L349.2 606.5 L353.6 628.5 L358.0 647.8 L362.5 663.8 L366.9 675.9 L371.3 683.8 L375.7 687.3 L380.1 686.1 L384.6 680.4 L389.0 670.3 L393.4 656.2 L397.8 638.5 L402.2 617.8 L406.7 594.7 L411.1 570.0 L415.5 544.5 L419.2 544.5 L419.0 544.5 L423.3 534.5 L427.6 524.6 L431.9 514.8 L436.2 505.1 L440.5 495.6 L444.8 486.4 L449.1 477.4 L453.4 468.8 L457.8 460.5 L462.1 452.6 L466.4 445.2 L470.7 438.3 L475.0 431.9 L479.3 426.0 L483.6 420.7 L487.9 416.1 L492.2 412.0 L496.5 408.6 L500.8 405.8 L505.1 403.8 L509.4 402.4 L513.7 401.7 L518.0 401.7 L522.3 402.4 L526.6 403.8 L530.9 405.8 L535.2 408.6 L539.6 412.0 L543.9 416.1 L548.2 420.7 L552.5 426.0 L556.8 431.9 L561.1 438.3 L565.4 445.2 L569.7 452.6 L574.0 460.5 L578.3 468.8 L582.6 477.4 L586.9 486.4 L591.2 495.6 L595.5 505.1 L599.8 514.8 L604.1 524.6 L608.4 534.5 L612.8 544.5 L617.1 554.5 L621.4 564.4 L625.7 574.2 L630.0 583.9 L634.3 593.4 L638.6 602.6 L642.9 611.6 L647.2 620.2 L651.5 628.5 L655.8 636.4 L660.1 643.8 L664.4 650.7 L668.7 657.1 L673.0 663.0 L677.3 668.3 L681.6 672.9 L685.9 677.0 L690.2 680.4 L694.6 683.2 L698.9 685.2 L703.2 686.6 L707.5 687.3 L711.8 687.3 L716.1 686.6 L720.4 685.2 L724.7 683.2 L729.0 680.4 L733.3 677.0 L737.6 672.9 L741.9 668.3 L746.2 663.0 L750.5 657.1 L754.8 650.7 L759.1 643.8 L763.4 636.4 L767.8 628.5 L772.1 620.2 L776.4 611.6 L780.7 602.6 L785.0 593.4 L789.3 583.9 L793.6 574.2 L797.9 564.4 L802.2 554.5 L806.5 544.5" fill="none" stroke="#1f7a3a" stroke-width="1.3"/><path d="M266.0 492.4 L272.0 498.4 M272.0 492.4 L266.0 498.4 M326.4 492.4 L332.4 498.4 M332.4 492.4 L326.4 498.4 M343.5 592.0 L349.5 598.0 M349.5 592.0 L343.5 598.0 M404.0 592.0 L410.0 598.0 M410.0 592.0 L404.0 598.0 M429.2 510.0 L435.2 516.0 M435.2 510.0 L429.2 516.0 M434.0 500.2 L440.0 506.2 M440.0 500.2 L434.0 506.2 M438.0 492.6 L444.0 498.6 M444.0 492.6 L438.0 498.6 M455.2 460.0 L461.2 466.0 M461.2 460.0 L455.2 466.0 M472.6 432.0 L478.6 438.0 M478.6 432.0 L472.6 438.0 M476.4 420.0 L482.4 426.0 M482.4 420.0 L476.4 426.0 M549.6 425.9 L555.6 431.9 M555.6 425.9 L549.6 431.9 M554.0 432.0 L560.0 438.0 M560.0 432.0 L554.0 438.0 M588.2 491.8 L594.2 497.8 M594.2 491.8 L588.2 497.8 M592.3 500.3 L598.3 506.3 M598.3 500.3 L592.3 506.3 M597.2 509.0 L603.2 515.0 M603.2 509.0 L597.2 515.0 M622.3 573.5 L628.3 579.5 M628.3 573.5 L622.3 579.5 M626.3 583.7 L632.3 589.7 M632.3 583.7 L626.3 589.7 M631.0 592.0 L637.0 598.0 M637.0 592.0 L631.0 598.0 M648.5 624.0 L654.5 630.0 M654.5 624.0 L648.5 630.0 M665.7 652.5 L671.7 658.5 M671.7 652.5 L665.7 658.5 M670.0 664.2 L676.0 670.2 M676.0 664.2 L670.0 670.2 M743.2 658.0 L749.2 664.0 M749.2 658.0 L743.2 664.0 M747.6 652.5 L753.6 658.5 M753.6 652.5 L747.6 658.5 M781.5 592.0 L787.5 598.0 M787.5 592.0 L781.5 598.0 M785.9 583.7 L791.9 589.7 M791.9 583.7 L785.9 589.7 M790.6 575.0 L796.6 581.0 M796.6 575.0 L790.6 581.0" stroke="#f01010" stroke-width="1.8" fill="none"/></svg>
<div class="t " style="left:231px;top:393px;font-size:11.3px;letter-spacing:-0.45px;margin-top:-0.5px">100</div>
<div class="t " style="left:231px;top:464px;font-size:11.3px;letter-spacing:-0.45px;margin-top:-0.5px">50</div>
<div class="t " style="left:231px;top:535px;font-size:11.3px;letter-spacing:-0.45px;margin-top:-0.5px">0</div>
<div class="t " style="left:226.5px;top:607px;font-size:11.3px;letter-spacing:-0.45px;margin-top:-0.5px">-50</div>
<div class="t " style="left:226.5px;top:678px;font-size:11.3px;letter-spacing:-0.45px;margin-top:-0.5px">-100</div>
<div class="t " style="left:254px;top:716px;font-size:11.5px">2.1</div>
<div class="t " style="left:301.5px;top:716px;font-size:11.5px">2.13</div>
<div class="t " style="left:352.7px;top:716px;font-size:11.5px">2.25</div>
<div class="t " style="left:404.3px;top:716px;font-size:11.5px">2.37</div>
<div class="t " style="left:455.8px;top:716px;font-size:11.5px">3.12</div>
<div class="t " style="left:507.3px;top:716px;font-size:11.5px">3.24</div>
<div class="t " style="left:558.8px;top:716px;font-size:11.5px">3.36</div>
<div class="t " style="left:610.3px;top:716px;font-size:11.5px">3.48</div>
<div class="t " style="left:661.8px;top:716px;font-size:11.5px">3.60</div>
<div class="t " style="left:713.3px;top:716px;font-size:11.5px">3.72</div>
<div class="t " style="left:764.8px;top:716px;font-size:11.5px">3.84</div>
<div class="a" style="left:705px;top:301px;width:343px;height:196px;background:#f0f0f0;border:1px solid #a0a0a0;border-right:2px solid #a0a0a0;border-bottom:2px solid #a0a0a0"></div>
<div class="a" style="left:706px;top:327px;width:340px;height:1px;background:#a0a0a0"></div>
<div class="a" style="left:706px;top:302px;width:153px;height:26px;background:#fff;border-right:1px solid #a0a0a0"></div>
<svg class="i" style="left:711px;top:307px" width="16" height="16" viewBox="0 0 16 16"><use href="#var"/></svg>
<div class="t " style="left:732.5px;top:307px;letter-spacing:0.271px;font-size:13.3px">*Plot Definitions</div>
<svg class="i" style="left:839px;top:309px" width="12" height="12" viewBox="0 0 12 12"><path d="M1.5 1.5 L10.5 10.5 M10.5 1.5 L1.5 10.5" stroke="#333" stroke-width="1.1"/></svg>
<svg class="i" style="left:881px;top:307px" width="17" height="16" viewBox="0 0 17 16"><rect x="1" y="2.5" width="12.5" height="12.5" fill="#fff" stroke="#3a4658" stroke-width="1.2"/><path d="M3 4.5 C6 5 9 9 11.5 13" fill="none" stroke="#d02030" stroke-width="1.2"/><path d="M3 13 C6 10 9 6 11.5 4.5" fill="none" stroke="#38a038" stroke-width="1.2"/><path d="M13 0 L14 2.5 L16.5 3.5 L14 4.5 L13 7 L12 4.5 L9.5 3.5 L12 2.5 Z" fill="#f5a800"/></svg>
<svg class="i" style="left:907px;top:305.5px" width="16.5" height="18.5" viewBox="0 0 14 17"><path d="M1.2 4 L12.8 4 L12.2 17 L1.8 17 Z" fill="#c00d1a"/><rect x="0" y="1.6" width="14" height="1.9" fill="#c00d1a"/><rect x="4.3" y="0" width="5.4" height="1.8" fill="#c00d1a"/><path d="M3.8 7 L10.2 14 M10.2 7 L3.8 14" stroke="#fff" stroke-width="2.1"/></svg>
<div class="a" style="left:931px;top:305px;width:1px;height:19px;background:#a0a0a0"></div>
<svg class="i" style="left:941px;top:307px" width="17" height="17" viewBox="0 0 17 17"><use href="#plus"/></svg>
<svg class="i" style="left:968px;top:307px" width="17" height="17" viewBox="0 0 17 17"><use href="#minus"/></svg>
<div class="a" style="left:990px;top:302px;width:26px;height:24px;background:#e5f1fb;border:1px solid #cce4f7;border-radius:2px"></div>
<div class="a" style="left:997px;top:308px;width:11px;height:5px;border:1px solid #111;background:#fff"></div>
<div class="a" style="left:1023px;top:308px;width:11.5px;height:11.5px;border:1px solid #111;background:linear-gradient(#f0f0f0 1px,#111 1px,#111 2.2px,#f0f0f0 2.2px)"></div>
<div class="a" style="left:714px;top:336px;width:324px;height:151px;background:#fff;border:1px solid #6e6e6e"></div>
<div class="vl" style="left:888px;top:337px;height:28px"></div><div class="vl" style="left:1002px;top:337px;height:28px"></div>
<div class="a" style="left:716px;top:365px;width:320px;height:20px;background:#d2d2d2"></div>
<div class="t " style="left:723px;top:342px;letter-spacing:0.035px;font-size:13.3px">Title</div>
<div class="t " style="left:895.5px;top:342px;letter-spacing:0.21px;font-size:13.3px">Mode/Passing</div>
<svg class="i" style="left:1010px;top:342px" width="18" height="18" viewBox="0 0 18 18"><path d="M5 1.8 L1.4 1.8 L1.4 16 L12.4 16 L12.4 13.5" fill="none" stroke="#2a3850" stroke-width="1.2"/><path d="M3.2 7.2 L6 7.2 M3.2 9.6 L6 9.6 M3.2 12 L5 12 M3.2 14 L9 14" stroke="#2a3850" stroke-width="1"/><path d="M8.8 1.8 L13.4 1.8 L16.2 4.8 L16.2 11 L8.8 11 Z" fill="#fff" stroke="#2a3850" stroke-width="1.1"/><rect x="5.8" y="3.6" width="5" height="1.7" fill="#d01828"/><path d="M11 9.4 L12.6 5.4 L14.2 9.4 M11.6 8 L13.6 8" fill="none" stroke="#e03040" stroke-width="0.7"/></svg>
<svg class="i" style="left:719.5px;top:368px" width="15" height="15" viewBox="0 0 15 15"><use href="#chev"/></svg>
<svg class="i" style="left:741px;top:367px" width="16" height="16" viewBox="0 0 16 16"><use href="#var"/></svg>
<div class="t " style="left:762.5px;top:365.5px;letter-spacing:-0.104px;font-size:13.3px">Variable "calc_sine"</div>
<div class="t " style="left:894.5px;top:365.5px;letter-spacing:-0.38px;font-size:13.3px">Test Case Plot</div>
<svg class="i" style="left:737.5px;top:389px" width="15" height="15" viewBox="0 0 15 15"><use href="#chev"/></svg>
<svg class="i" style="left:760px;top:387px" width="16" height="16" viewBox="0 0 16 16"><rect x="1" y="6" width="10" height="8.5" fill="#f5a800"/><rect x="3" y="8" width="6" height="4.5" fill="#fff"/><path d="M5 11.5 C5 7 8 5 11 5 L11 2 L15.5 6.3 L11 10.5 L11 7.5 C8.5 7.5 6.5 8.5 5 11.5 Z" fill="#1f3350"/></svg>
<div class="t " style="left:781.5px;top:386px;letter-spacing:-0.194px;font-size:13.3px">calc_sine</div>
<div class="t " style="left:894.5px;top:386px;letter-spacing:-0.158px;font-size:13.3px">OUT</div>
<div class="a" style="left:781px;top:411px;width:9px;height:9px;border-radius:50%;background:#1878a8"></div>
<div class="t " style="left:798.8px;top:406.7px;letter-spacing:-0.007px;font-size:13.3px;color:#3a1a9a">Expected</div>
<div class="a" style="left:781px;top:431.5px;width:9px;height:9px;border-radius:50%;background:#1e9a28"></div>
<div class="t " style="left:798.8px;top:427.2px;letter-spacing:0.439px;font-size:13.3px;color:#1a8a1a">Actual</div>
<svg class="i" style="left:780px;top:451px" width="11" height="11" viewBox="0 0 11 11"><path d="M1.5 1.5 L9.5 9.5 M9.5 1.5 L1.5 9.5" stroke="#c01020" stroke-width="2.2"/></svg>
<div class="t " style="left:798.8px;top:447.7px;letter-spacing:-0.021px;font-size:13.3px;color:#a01020">Failed</div>
<svg class="i" style="left:1012px;top:367px" width="16" height="16" viewBox="0 0 16 16"><use href="#chk"/></svg>
<svg class="i" style="left:1012px;top:388px" width="16" height="16" viewBox="0 0 16 16"><use href="#chk"/></svg>
<svg class="i" style="left:1012px;top:408px" width="16" height="16" viewBox="0 0 16 16"><use href="#chk"/></svg>
<svg class="i" style="left:1012px;top:429px" width="16" height="16" viewBox="0 0 16 16"><use href="#chk"/></svg>
<svg class="i" style="left:1012px;top:449px" width="16" height="16" viewBox="0 0 16 16"><use href="#chk"/></svg>
</body></html>
